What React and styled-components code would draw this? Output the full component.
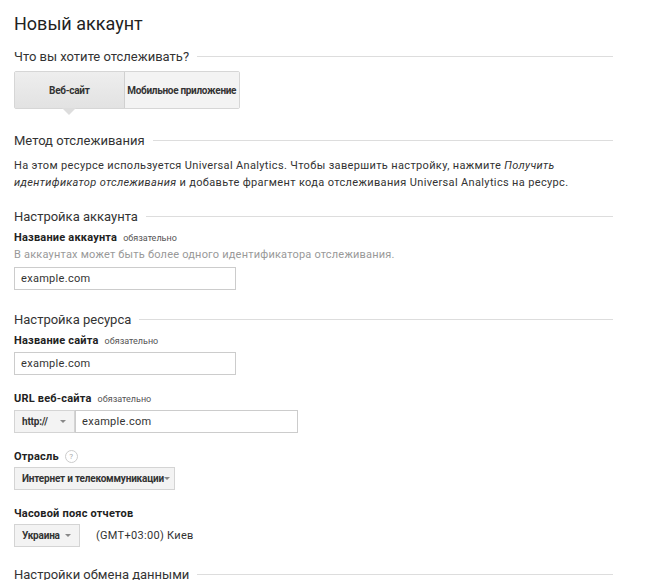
import React from "react";
import styled, { createGlobalStyle } from "styled-components";

const G = createGlobalStyle`
  html,body{margin:0;background:#fff;}
  body{font-family:Roboto,"Liberation Sans",sans-serif;color:#222;overflow:hidden;height:580px;}
`;
const Page = styled.div`padding:11px 54px 0 14px;`;
const Title = styled.h1`font-size:18px;font-weight:400;margin:0 0 10px;line-height:26px;color:#222;`;
const Section = styled.div`
  display:flex;align-items:center;gap:8px;font-size:13px;color:#333;height:18px;margin:${p=>p.m||"0"};white-space:nowrap;
  &::after{content:"";flex:1;height:1px;background:#ddd;}
`;
const Toggle = styled.div`display:flex;margin-top:6px;width:224px;border:1px solid #d6d6d6;border-radius:2px;`;
const TBtn = styled.div`
  position:relative;height:36px;display:flex;align-items:center;justify-content:center;white-space:nowrap;letter-spacing:-0.3px;
  font-size:10px;font-weight:700;color:#333;width:${p=>p.w}px;
  background:${p=>p.active?"linear-gradient(#eee,#e2e2e2)":"#f3f3f3"};
  ${p=>p.active?`border-right:1px solid #d0d0d0;&::after{content:"";position:absolute;bottom:-7px;left:50%;margin-left:-7px;border:7px solid transparent;border-bottom:0;border-top-color:#ddd;}`:""}
`;
const Text = styled.p`font-size:11px;line-height:17px;color:#333;margin:8px 0 16px;letter-spacing:0.35px;max-width:570px;`;
const Label = styled.div`font-size:11px;font-weight:700;color:#222;margin-top:${p=>p.mt||0}px;display:flex;align-items:center;gap:6px;letter-spacing:0.2px;
  small{font-size:9px;font-weight:400;color:#555;letter-spacing:0;}`;
const Hint = styled.div`font-size:11px;color:#999;margin-top:4px;letter-spacing:0.2px;`;
const Input = styled.div`box-sizing:border-box;width:${p=>p.w||222}px;height:23px;border:1px solid #ccc;font-size:11px;color:#333;display:flex;align-items:center;padding-left:6px;letter-spacing:0.3px;`;
const Row = styled.div`display:flex;align-items:center;margin-top:${p=>p.mt||0}px;`;
const Select = styled.div`box-sizing:border-box;height:23px;border:1px solid #d4d4d4;background:#f3f3f3;font-size:10px;font-weight:700;color:#333;white-space:nowrap;letter-spacing:-0.2px;
  display:flex;align-items:center;padding:0 8px 0 7px;width:${p=>p.w}px;justify-content:space-between;
  &::after{content:"";border:3px solid transparent;border-bottom:0;border-top-color:#888;}`;
const Q = styled.span`display:inline-flex;width:11px;height:11px;border:1px solid #ccc;border-radius:50%;font-size:8px;color:#aaa;align-items:center;justify-content:center;font-weight:400;`;
const Tz = styled.span`font-size:11px;color:#333;margin-left:16px;letter-spacing:0.3px;`;

export default function App(){
  return <Page><G/>
    <Title>Новый аккаунт</Title>
    <Section>Что вы хотите отслеживать?</Section>
    <Toggle><TBtn active w={109}>Веб-сайт</TBtn><TBtn w={115}>Мобильное приложение</TBtn></Toggle>
    <Section m="22px 0 0">Метод отслеживания</Section>
    <Text>На этом ресурсе используется Universal Analytics. Чтобы завершить настройку, нажмите <i>Получить идентификатор отслеживания</i> и добавьте фрагмент кода отслеживания Universal Analytics на ресурс.</Text>
    <Section>Настройка аккаунта</Section>
    <Label mt={6}>Название аккаунта <small>обязательно</small></Label>
    <Hint>В аккаунтах может быть более одного идентификатора отслеживания.</Hint>
    <Row mt={6}><Input>example.com</Input></Row>
    <Section m="20px 0 0">Настройка ресурса</Section>
    <Label mt={6}>Название сайта <small>обязательно</small></Label>
    <Row mt={5}><Input>example.com</Input></Row>
    <Label mt={17}>URL веб-сайта <small>обязательно</small></Label>
    <Row mt={5}><Select w={61}>http://</Select><Input w={223}>example.com</Input></Row>
    <Label mt={17}>Отрасль <Q>?</Q></Label>
    <Row mt={4}><Select w={161}>Интернет и телекоммуникации</Select></Row>
    <Label mt={17}>Часовой пояс отчетов</Label>
    <Row mt={4}><Select w={66}>Украина</Select><Tz>(GMT+03:00) Киев</Tz></Row>
    <Section m="18px 0 0">Настройки обмена данными</Section>
  </Page>;
}
